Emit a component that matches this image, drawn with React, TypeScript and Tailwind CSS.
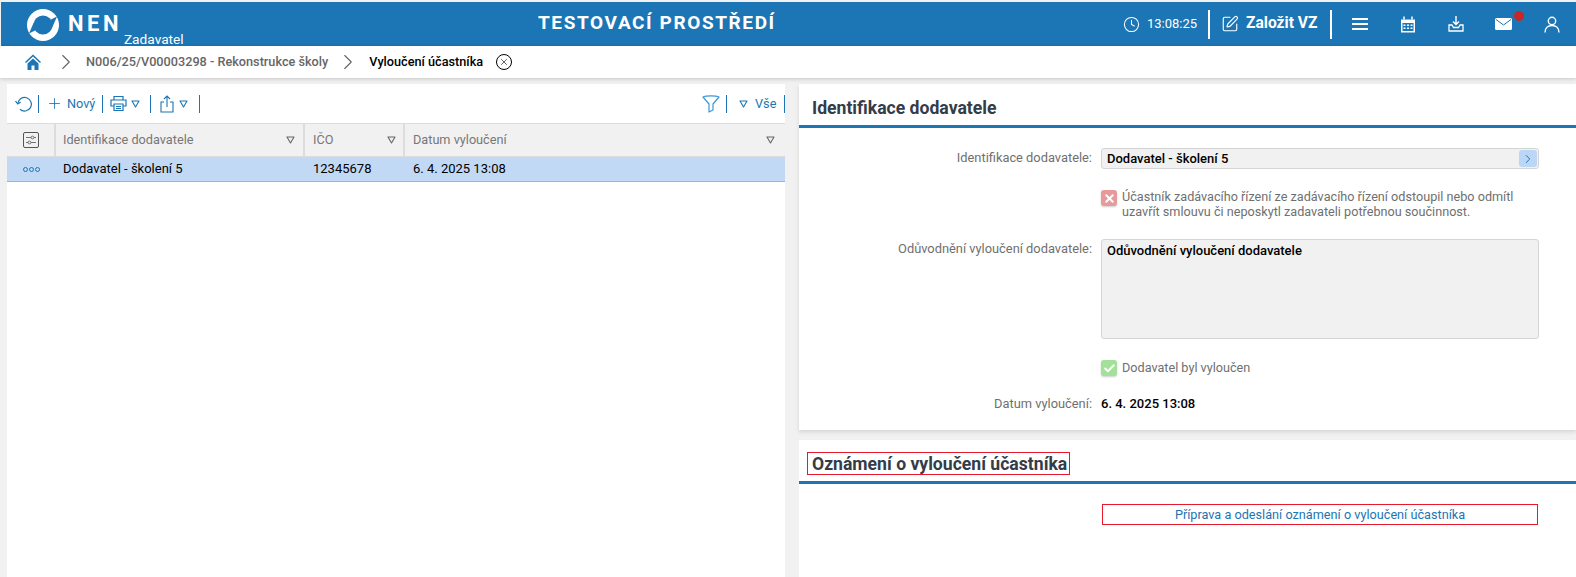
import { Clock, SquarePen, Plus, ChevronRight, X, Check } from "lucide-react";

function Tri({ className = "text-[#1c75b4]" }: { className?: string }) {
  return (
    <svg width="9" height="8" viewBox="0 0 9 8" className={className}>
      <path d="M1 1h7L4.500 7z" fill="none" stroke="currentColor" strokeWidth="1.100" strokeLinejoin="round" />
    </svg>
  );
}

function Sep() {
  return <span className="block w-px h-[18px] bg-[#1c75b4]" />;
}

function Logo() {
  const notch = "M7 13L9 21L2 24.500Z";
  return (
    <svg width="32" height="32" viewBox="0 0 32 32" className="shrink-0">
      <circle cx="16" cy="16" r="16" fill="#fff" />
      <circle cx="16" cy="16" r="9.500" fill="#1c75b4" />
      <path d={notch} fill="#1c75b4" />
      <path d={notch} fill="#1c75b4" transform="rotate(180 16 16)" />
    </svg>
  );
}

function Header() {
  return (
    <header className="h-11 bg-[#1c75b4] text-white flex items-center relative ml-px shrink-0">
      <div className="flex items-start pl-[26px] h-full pt-[7px]">
        <Logo />
        <span className="ml-[9px] mt-[2px] text-[22px] leading-[26px] font-bold tracking-[3.500px]">NEN</span>
        <span className="ml-[2px] mt-[22px] text-[13.700px] leading-4">Zadavatel</span>
      </div>
      <div className="absolute left-[537px] top-[9px] text-[19px] leading-6 font-bold tracking-[1.600px]">TESTOVACÍ PROSTŘEDÍ</div>
      <div className="ml-auto flex items-center h-full">
        <Clock size={17} strokeWidth={1.500} />
        <span className="ml-[7px] text-[13px] w-[61px]">13:08:25</span>
        <span className="w-[2px] h-[29px] bg-white" />
        <SquarePen size={18} strokeWidth={1.500} className="ml-[11px]" />
        <span className="ml-[7px] text-[15.600px] font-bold w-[84px]">Založit VZ</span>
        <span className="w-[2px] h-[29px] bg-white" />
        <svg width="16" height="14" viewBox="0 0 16 14" className="ml-5">
          <path d="M0 2h16M0 7h16M0 12h16" stroke="#fff" strokeWidth="2" />
        </svg>
        <svg width="16" height="17" viewBox="0 0 16 17" className="ml-8">
          <path d="M1 3.500h14v13H1z" fill="#fff" />
          <path d="M4 0.500v3M12 0.500v3" stroke="#fff" strokeWidth="1.500" />
          <path d="M2.500 7h11v8h-11z" fill="#1c75b4" />
          <path d="M3.500 8.500h2v1.500h-2zM7 8.500h2v1.500H7zM10.500 8.500h2v1.500h-2zM3.500 11.500h2V13h-2zM7 11.500h2V13H7zM10.500 11.500h2V13h-2z" fill="#fff" />
        </svg>
        <svg width="16" height="16" viewBox="0 0 16 16" className="ml-8">
          <path d="M8 0v8M5 5.500 8 8.500l3-3" fill="none" stroke="#fff" strokeWidth="1.400" />
          <path d="M4 9H1v6h14V9h-3l-1.500 2.500h-5z" fill="none" stroke="#fff" strokeWidth="1.300" />
        </svg>
        <div className="relative ml-[31px]">
          <svg width="17" height="12" viewBox="0 0 17 12" className="block">
            <rect width="17" height="12" rx="1.500" fill="#fff" />
            <path d="M1 1.500 8.500 7 16 1.500" fill="none" stroke="#1c75b4" strokeWidth="1" />
          </svg>
          <span className="absolute -top-[7px] -right-[12px] w-[10px] h-[10px] rounded-full bg-[#c62828]" />
        </div>
        <svg width="16" height="17" viewBox="0 0 16 17" className="ml-8 mr-4">
          <circle cx="8" cy="5" r="3.700" fill="none" stroke="#fff" strokeWidth="1.400" />
          <path d="M1 16.500c0-4.500 3-7 7-7s7 2.500 7 7" fill="none" stroke="#fff" strokeWidth="1.400" />
        </svg>
      </div>
    </header>
  );
}

function Breadcrumb() {
  return (
    <nav className="h-8 bg-white flex items-center pl-[25px] shadow-[0_1px_4px_rgba(0,0,0,0.18)] shrink-0 relative text-[12.700px] font-medium">
      <svg width="16" height="16" viewBox="0 0 16 16" className="text-[#1c75b4]">
        <path d="M8 .500 0 8l1 1L8 2.500 15 9l1-1zM8 4.500 2.500 9.500V16h4v-4.500h3V16h4V9.500z" fill="currentColor" />
      </svg>
      <ChevronRight size={26} strokeWidth={1} className="ml-3 text-[#666]" />
      <span className="ml-[7px] text-[#666]">N006/25/V00003298 - Rekonstrukce školy</span>
      <ChevronRight size={26} strokeWidth={1} className="ml-[7px] text-[#666]" />
      <span className="ml-2 text-black">Vyloučení účastníka</span>
      <span className="ml-[13px] w-4 h-4 rounded-full border border-black flex items-center justify-center">
        <X size={10} strokeWidth={1.500} className="text-black" />
      </span>
    </nav>
  );
}

function Toolbar() {
  return (
    <div className="h-[39px] flex items-center text-[#1c75b4] text-[12.700px] pl-[8px]">
      <svg width="17" height="17" viewBox="0 0 17 17">
        <path d="M2.800 8.500A6.800 6.800 0 1 1 5 14.300" fill="none" stroke="currentColor" strokeWidth="1.200" />
        <path d="M.5 6.200 2.800 9l2.900-2" fill="none" stroke="currentColor" strokeWidth="1.200" />
      </svg>
      <span className="ml-[6px]"><Sep /></span>
      <Plus size={17} strokeWidth={1.200} className="ml-[7px]" />
      <span className="ml-[4px]">Nový</span>
      <span className="ml-[7px]"><Sep /></span>
      <svg width="17" height="17" viewBox="0 0 17 17" className="ml-[7px]">
        <path d="M4 5V1.500h9V5M4 11H1V5h15v6h-3M4 9h9v6.500H4zM6 11.500h5M6 13.500h5" fill="none" stroke="currentColor" strokeWidth="1.200" />
      </svg>
      <span className="ml-1"><Tri /></span>
      <span className="ml-[10px]"><Sep /></span>
      <svg width="14" height="18" viewBox="0 0 14 18" className="ml-[9px]">
        <path d="M4 7H1v10h12V7h-3M7 12V1M4 4l3-3 3 3" fill="none" stroke="currentColor" strokeWidth="1.100" />
      </svg>
      <span className="ml-[5px]"><Tri /></span>
      <span className="ml-[11px]"><Sep /></span>
      <svg width="18" height="18" viewBox="0 0 18 18" className="ml-auto text-[#3a97dc]">
        <path d="M1 2c3-1.500 13-1.500 16 0l-6 7v6l-4 2V9z" fill="none" stroke="currentColor" strokeWidth="1.200" strokeLinejoin="round" />
      </svg>
      <span className="ml-[6px]"><Sep /></span>
      <span className="ml-3"><Tri /></span>
      <span className="ml-[7px] w-[23px]">Vše</span>
      <span className="ml-[6px]"><Sep /></span>
    </div>
  );
}

function Table() {
  return (
    <div>
      <div className="h-[34px] flex bg-[#f1f1f1] border-y border-[#dcdcdc] text-[#777] text-[12.700px]">
        <div className="w-[49px] flex items-center justify-center border-r-2 border-[#dcdcdc]">
          <svg width="16" height="16" viewBox="0 0 16 16" className="text-[#555]">
            <rect x=".5" y=".5" width="15" height="15" rx="1.500" fill="none" stroke="currentColor" />
            <path d="M3 5.500h5M11 5.500h2M3 10.500h2M8 10.500h5" stroke="currentColor" strokeWidth=".8" />
            <circle cx="9.500" cy="5.500" r="1.400" fill="none" stroke="currentColor" strokeWidth=".8" />
            <circle cx="6.500" cy="10.500" r="1.400" fill="none" stroke="currentColor" strokeWidth=".8" />
          </svg>
        </div>
        <div className="w-[249px] flex items-center justify-between pl-[7px] pr-2 border-r-2 border-[#dcdcdc]">
          Identifikace dodavatele
          <Tri className="text-[#666]" />
        </div>
        <div className="w-[100px] flex items-center justify-between pl-2 pr-[7px] border-r-2 border-[#dcdcdc]">
          IČO
          <Tri className="text-[#666]" />
        </div>
        <div className="flex-1 flex items-center justify-between pl-2 pr-[10px]">
          Datum vyloučení
          <Tri className="text-[#666]" />
        </div>
      </div>
      <div className="h-[25px] flex items-center bg-[#c2d9f5] border-b border-[#8fb8e8] text-black text-[13px]">
        <div className="w-[49px] flex justify-center gap-[1px]">
          <span className="w-[5px] h-[5px] rounded-full border border-[#1c75b4]" />
          <span className="w-[5px] h-[5px] rounded-full border border-[#1c75b4]" />
          <span className="w-[5px] h-[5px] rounded-full border border-[#1c75b4]" />
        </div>
        <div className="w-[249px] pl-[7px]">Dodavatel - školení 5</div>
        <div className="w-[100px] pl-2">12345678</div>
        <div className="flex-1 pl-2">6. 4. 2025 13:08</div>
      </div>
    </div>
  );
}

function Row({ label, children }: { label?: string; children: React.ReactNode }) {
  return (
    <div className="flex">
      <div className="w-[295px] text-right text-[12.850px] leading-[19.500px] text-[#6f6f6f] pr-[2px] shrink-0">{label}</div>
      <div className="w-[438px] ml-[7px] shrink-0">{children}</div>
    </div>
  );
}

function Detail() {
  return (
    <section className="bg-white h-[346px] shadow-[0_2px_4px_rgba(0,0,0,0.12)] shrink-0 text-[13px]">
      <h2 className="h-11 pl-[13px] pt-[12px] text-[17.600px] leading-6 font-bold text-[#333c48] border-b-[3px] border-[#1c75b4]">Identifikace dodavatele</h2>
      <div className="pt-5">
        <Row label="Identifikace dodavatele:">
          <div className="h-[21px] rounded-[3px] border border-[#d4d4d4] bg-[#f1f1f1] flex items-center justify-between pl-[5px] pr-[1px] font-medium text-black">
            Dodavatel - školení 5
            <span className="w-[18px] h-[17px] rounded-[3px] bg-[#bcd6f5] flex items-center justify-center text-[#1c75b4]">
              <ChevronRight size={14} strokeWidth={1.700} />
            </span>
          </div>
        </Row>
        <div className="mt-5">
          <Row>
            <div className="flex gap-[5px] text-[#6f6f6f] text-[12.650px] leading-[15px]">
              <span className="mt-[1px] w-4 h-4 rounded-[3px] bg-[#e89a9a] text-white flex items-center justify-center shrink-0 shadow-[0_1px_2px_rgba(0,0,0,0.2)]">
                <X size={13} strokeWidth={3.500} />
              </span>
              <span>Účastník zadávacího řízení ze zadávacího řízení odstoupil nebo odmítl<br />uzavřít smlouvu či neposkytl zadavateli potřebnou součinnost.</span>
            </div>
          </Row>
        </div>
        <div className="mt-5">
          <Row label="Odůvodnění vyloučení dodavatele:">
            <div className="h-[100px] rounded-[3px] border border-[#d4d4d4] bg-[#f1f1f1] pl-[5px] pt-px font-medium text-black">Odůvodnění vyloučení dodavatele</div>
          </Row>
        </div>
        <div className="mt-5">
          <Row>
            <div className="flex items-center gap-[5px] text-[#6f6f6f] text-[12.650px]">
              <span className="w-4 h-4 rounded-[3px] bg-[#a3e09b] text-white flex items-center justify-center shrink-0 shadow-[0_1px_2px_rgba(0,0,0,0.2)]">
                <Check size={13} strokeWidth={3.500} />
              </span>
              Dodavatel byl vyloučen
            </div>
          </Row>
        </div>
        <div className="mt-4">
          <Row label="Datum vyloučení:">
            <span className="font-medium text-black">6. 4. 2025 13:08</span>
          </Row>
        </div>
      </div>
    </section>
  );
}

function Notice() {
  return (
    <section className="bg-white flex-1 mt-[10px] text-[12.700px]">
      <div className="h-11 pl-2 pt-3 border-b-[3px] border-[#1c75b4]">
        <h2 className="inline-block border border-[#e8192c] pl-[4px] pr-[2px] h-[23px] text-[17.600px] leading-[22px] font-bold text-[#333c48]">Oznámení o vyloučení účastníka</h2>
      </div>
      <div className="mt-5 ml-[303px] w-[436px] h-[21px] border border-[#e8192c] text-center text-[#1c75b4] leading-[19px]">Příprava a odeslání oznámení o vyloučení účastníka</div>
    </section>
  );
}

export default function App() {
  return (
    <div className="h-[577px] w-full overflow-hidden flex flex-col bg-[#f1f1f1] pt-[2px] font-[Roboto,'Liberation_Sans',sans-serif]">
      <Header />
      <Breadcrumb />
      <main className="flex-1 flex pt-[6px] min-h-0">
        <div className="w-[778px] ml-[7px] bg-white shrink-0">
          <Toolbar />
          <Table />
        </div>
        <div className="flex-1 ml-[14px] flex flex-col">
          <Detail />
          <Notice />
        </div>
      </main>
    </div>
  );
}
